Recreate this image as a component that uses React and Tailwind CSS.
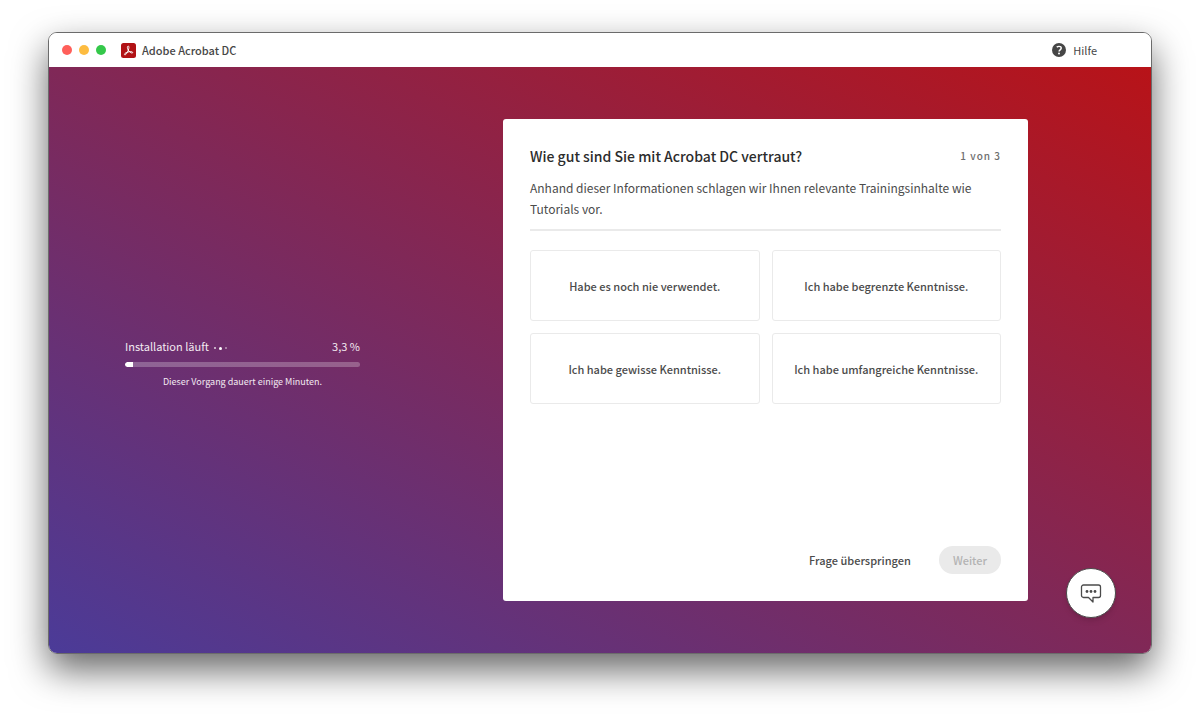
import { useState } from "react";

const answers = [
  "Habe es noch nie verwendet.",
  "Ich habe begrenzte Kenntnisse.",
  "Ich habe gewisse Kenntnisse.",
  "Ich habe umfangreiche Kenntnisse.",
];

function AcrobatLogo() {
  return (
    <svg className="size-[15px]" viewBox="0 0 30 30" aria-hidden="true">
      <rect width="30" height="30" rx="5" fill="#b11215" />
      <path
        d="M14.2 6.2c1.7-.2 2 2 1.3 4.9-.9 4.100-3.300 9.300-5.900 11.800-1.200 1.200-2.900 1-2.700-.4.400-2.400 5.800-4.700 10.300-5.200 3-.3 6.200.2 6.200 1.700 0 1.600-2.900 1.300-5.400-.8-2.700-2.200-5-5.900-5.200-9.200-.1-1.500.4-2.700 1.400-2.800Z"
        fill="none"
        stroke="#fff"
        strokeWidth="2"
      />
    </svg>
  );
}

function HelpIcon() {
  return (
    <svg className="size-[14px]" viewBox="0 0 28 28" aria-hidden="true">
      <circle cx="14" cy="14" r="14" fill="#464646" />
      <path
        d="M9.500 8.200c1.300-1 2.800-1.500 4.500-1.500 2.700 0 4.500 1.300 4.500 3.500 0 3.400-4.300 3.500-4.300 6.800"
        fill="none"
        stroke="#fff"
        strokeWidth="2.900"
      />
      <circle cx="14" cy="21" r="2" fill="#fff" />
    </svg>
  );
}

function ChatIcon() {
  return (
    <svg className="h-5 w-[22px]" viewBox="0 0 22 20" fill="none" aria-hidden="true">
      <path
        d="M3.500 2h15a2 2 0 0 1 2 2v8.500a2 2 0 0 1-2 2h-5.500v4.500l-4.500-4.500h-5a2 2 0 0 1-2-2V4a2 2 0 0 1 2-2Z"
        stroke="#4b4b4b"
        strokeWidth="1.300"
        strokeLinejoin="round"
      />
      <g fill="#4b4b4b">
        <circle cx="7" cy="8.500" r="1.400" />
        <circle cx="11" cy="8.500" r="1.400" />
        <circle cx="15" cy="8.500" r="1.400" />
      </g>
    </svg>
  );
}

function TitleBar() {
  return (
    <header className="flex h-[34px] items-center bg-white pr-[54px] pl-[13px] text-[#464646]">
      <div className="flex gap-[7px]">
        <span className="size-[10px] rounded-full bg-[#ff5f5a]" />
        <span className="size-[10px] rounded-full bg-[#fdbc40]" />
        <span className="size-[10px] rounded-full bg-[#34c84a]" />
      </div>
      <div className="ml-[15px] flex items-center gap-[6px]">
        <AcrobatLogo />
        <h1 className="text-[11px] leading-4 font-medium">Adobe Acrobat DC</h1>
      </div>
      <button type="button" className="ml-auto flex items-center gap-[7px] text-[11px] leading-4">
        <HelpIcon />
        Hilfe
      </button>
    </header>
  );
}

function InstallProgress({ percent }) {
  return (
    <section className="mt-1.5 self-center text-[#f3eaf1]">
      <div className="flex items-center justify-between text-[11px] leading-5">
        <p className="flex items-center gap-[5px]">
          Installation läuft
          <span className="flex items-center gap-[3px] pt-1">
            <span className="size-[2px] rounded-full bg-white/80" />
            <span className="size-[3px] rounded-full bg-white" />
            <span className="size-[2px] rounded-full bg-white/50" />
          </span>
        </p>
        <span>{percent.toLocaleString("de-DE")} %</span>
      </div>
      <div className="mt-[6px] h-[5px] overflow-hidden rounded-full bg-white/25">
        <div className="h-full rounded-l-full bg-white" style={{ width: `${percent}%` }} />
      </div>
      <p className="mt-[7px] text-center text-[9px] leading-4">Dieser Vorgang dauert einige Minuten.</p>
    </section>
  );
}

function Survey() {
  const [selected, setSelected] = useState(null);

  return (
    <section className="flex flex-col rounded-[3px] bg-white p-[27px] text-[#4b4b4b]">
      <div className="flex items-center justify-between">
        <h2 className="text-[14px] leading-5 font-medium text-[#2c2c2c]">Wie gut sind Sie mit Acrobat DC vertraut?</h2>
        <span className="text-[10px] leading-5 font-medium tracking-widest text-[#6e6e6e]">1 von 3</span>
      </div>
      <p className="mt-[11px] border-b-2 border-[#eaeaea] pb-[10px] text-xs leading-[21px]">
        Anhand dieser Informationen schlagen wir Ihnen relevante Trainingsinhalte wie Tutorials vor.
      </p>
      <div className="mt-[19px] grid grid-cols-2 gap-3">
        {answers.map((answer) => (
          <button
            key={answer}
            type="button"
            aria-pressed={selected === answer}
            onClick={() => setSelected(answer)}
            className="h-[71px] rounded-[3px] border border-[#eaeaea] text-[11px] leading-4 font-medium aria-pressed:border-[#4b4b4b]"
          >
            {answer}
          </button>
        ))}
      </div>
      <div className="mt-auto flex items-center justify-end gap-7 text-[11px] leading-4 font-medium">
        <button type="button">Frage überspringen</button>
        <button
          type="button"
          disabled={!selected}
          className="h-7 rounded-full bg-[#4b4b4b] px-[14px] text-white disabled:bg-[#eaeaea] disabled:text-[#b3b3b3]"
        >
          Weiter
        </button>
      </div>
    </section>
  );
}

export default function App() {
  return (
    <div className="flex min-h-screen bg-white px-12 pt-8 pb-[63px] font-['Noto_Sans_CJK_SC','Noto_Sans',sans-serif]">
      <div className="relative flex flex-1 flex-col overflow-hidden rounded-[9px] border border-[#6b6b6b] shadow-[0_16px_36px_rgba(0,0,0,0.6)]">
        <TitleBar />
        <main className="grid flex-1 grid-cols-[235fr_525fr] gap-[143px] bg-linear-to-tr/srgb from-[#4b3b98] via-[#802857] to-[#b81318] py-[52px] pr-[123px] pl-[76px]">
          <InstallProgress percent={3.3} />
          <Survey />
        </main>
        <button
          type="button"
          aria-label="Chat"
          className="absolute right-[35px] bottom-[35px] flex size-[50px] items-center justify-center rounded-full border border-[#4b4b4b] bg-white shadow-md"
        >
          <ChatIcon />
        </button>
      </div>
    </div>
  );
}
